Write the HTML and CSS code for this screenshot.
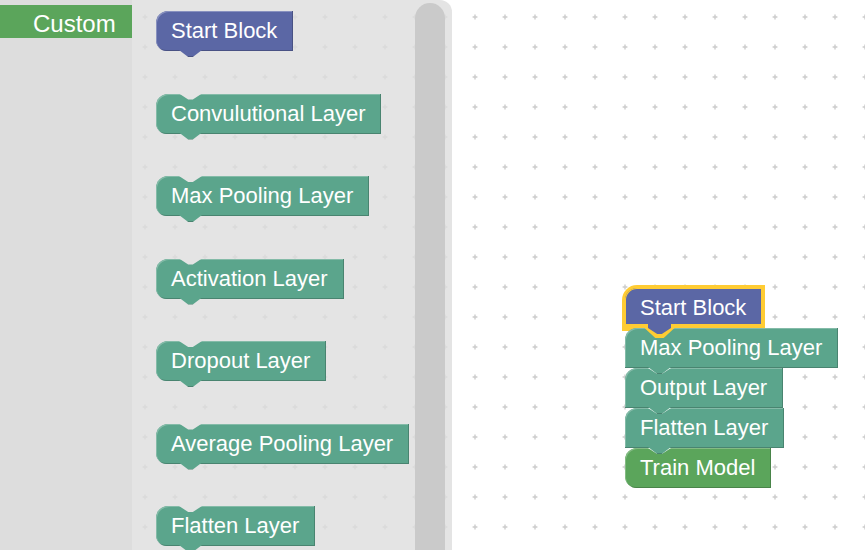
FILE: index.html
```html
<!DOCTYPE html>
<html>
<head>
<meta charset="utf-8">
<title>Blocks</title>
<link rel="stylesheet" href="styles.css">
</head>
<body>
<div class="app">
  <svg class="grid" width="865" height="550" aria-hidden="true">
    <defs>
      <pattern id="dots" x="10" y="2" width="30" height="30" patternUnits="userSpaceOnUse">
        <path d="M12.6 15h4.8M15 12.6v4.8" stroke="#cccccc" stroke-width="1.4" fill="none"/>
      </pattern>
    </defs>
    <rect width="865" height="550" fill="url(#dots)"/>
  </svg>

  <aside class="toolbox">
    <div class="category">Custom</div>
  </aside>

  <section class="flyout">
    <div class="flyout-blocks">
      <div class="block start">Start Block</div>
      <div class="block layer">Convulutional Layer</div>
      <div class="block layer">Max Pooling Layer</div>
      <div class="block layer">Activation Layer</div>
      <div class="block layer">Dropout Layer</div>
      <div class="block layer">Average Pooling Layer</div>
      <div class="block layer">Flatten Layer</div>
    </div>
    <div class="scrollbar"></div>
  </section>

  <main class="workspace">
    <div class="stack">
      <div class="block start selected">Start Block</div>
      <div class="block layer">Max Pooling Layer</div>
      <div class="block layer">Output Layer</div>
      <div class="block layer">Flatten Layer</div>
      <div class="block train">Train Model</div>
    </div>
  </main>
</div>
</body>
</html>
```

FILE: styles.css
```css
* { box-sizing: border-box; }

html, body {
  margin: 0;
  padding: 0;
}

body {
  width: 865px;
  height: 550px;
  overflow: hidden;
  background: #ffffff;
  font-family: "Liberation Sans", Arial, sans-serif;
}

.app {
  position: relative;
  display: flex;
  width: 865px;
  height: 550px;
}

.grid {
  position: absolute;
  left: 0;
  top: 0;
}

/* toolbox */
.toolbox {
  position: relative;
  flex: none;
  width: 132px;
  background: #dddddd;
  padding-top: 5px;
}

.category {
  height: 33px;
  background: #5ba55b;
  color: #ffffff;
  font-size: 24px;
  line-height: 29px;
  padding: 4px 0 0 33px;
  white-space: nowrap;
}

/* flyout */
.flyout {
  position: relative;
  flex: none;
  width: 320px;
  display: flex;
  padding: 11px 7px 0 24px;
  background: rgba(221, 221, 221, 0.8);
  border-top-right-radius: 12px;
  overflow: hidden;
}

.flyout-blocks {
  flex: 1;
  display: flex;
  flex-direction: column;
  align-items: flex-start;
  gap: 42.5px;
}

.flyout-blocks .block {
  border-bottom-left-radius: 11px;
}

.scrollbar {
  flex: none;
  width: 30px;
  height: 600px;
  margin-top: -8px;
  border-radius: 15px;
  background: #cacaca;
}

/* workspace */
.workspace {
  position: relative;
  flex: 1;
}

.stack {
  position: absolute;
  left: 173px;
  top: 288px;
  display: flex;
  flex-direction: column;
  align-items: flex-start;
}

/* blocks */
.block {
  --c: #5ba58c;
  --d: #498470;
  --l: #84bba8;
  --bg: #e4e4e4;
  position: relative;
  height: 40px;
  padding: 0 16px 0 15px;
  line-height: 40px;
  font-size: 22px;
  color: #ffffff;
  white-space: nowrap;
  background: var(--c);
  border-top-left-radius: 12px;
  box-shadow: inset -1px -1px 0 var(--d), inset 1px 1px 0 var(--l);
}

.block.start {
  --c: #5b67a5;
  --d: #495284;
  --l: #8891bf;
}

.block.train {
  --c: #5ba55b;
  --d: #498449;
  --l: #84bb84;
  border-bottom-left-radius: 12px;
}

.stack .block { --bg: #ffffff; }

/* top notch (previous connection) */
.block::before {
  content: "";
  position: absolute;
  left: 23px;
  top: 0;
  width: 23px;
  height: 6px;
  background: var(--bg);
  clip-path: polygon(0 0, 100% 0, 60% 100%, 40% 100%);
}

/* bottom tab (next connection) */
.block::after {
  content: "";
  position: absolute;
  z-index: 1;
  left: 23px;
  top: calc(100% - 1px);
  width: 23px;
  height: 7px;
  background: linear-gradient(var(--c) 6px, var(--d) 6px);
  clip-path: polygon(0 0, 100% 0, 60% 100%, 40% 100%);
}

.block.start::before { display: none; }
.block.train::after { display: none; }

/* selected block in workspace */
.block.selected {
  box-shadow: 0 0 0 3px #ffcc33, inset 0 0 0 1px #ffcc33, inset 0 -4px 0 #ffcc33;
}

.block.selected::before {
  display: block;
  z-index: 1;
  left: 19.5px;
  top: calc(100% - 4px);
  width: 30px;
  height: 14px;
  background: #ffcc33;
  clip-path: polygon(0 0, 100% 0, 100% 4px, 64% 100%, 36% 100%, 0 4px);
}

.block.selected::after {
  z-index: 2;
  top: calc(100% - 4px);
  height: 10px;
  background: var(--c);
  clip-path: polygon(0 0, 100% 0, 100% 4px, 60% 100%, 40% 100%, 0 4px);
}
```
